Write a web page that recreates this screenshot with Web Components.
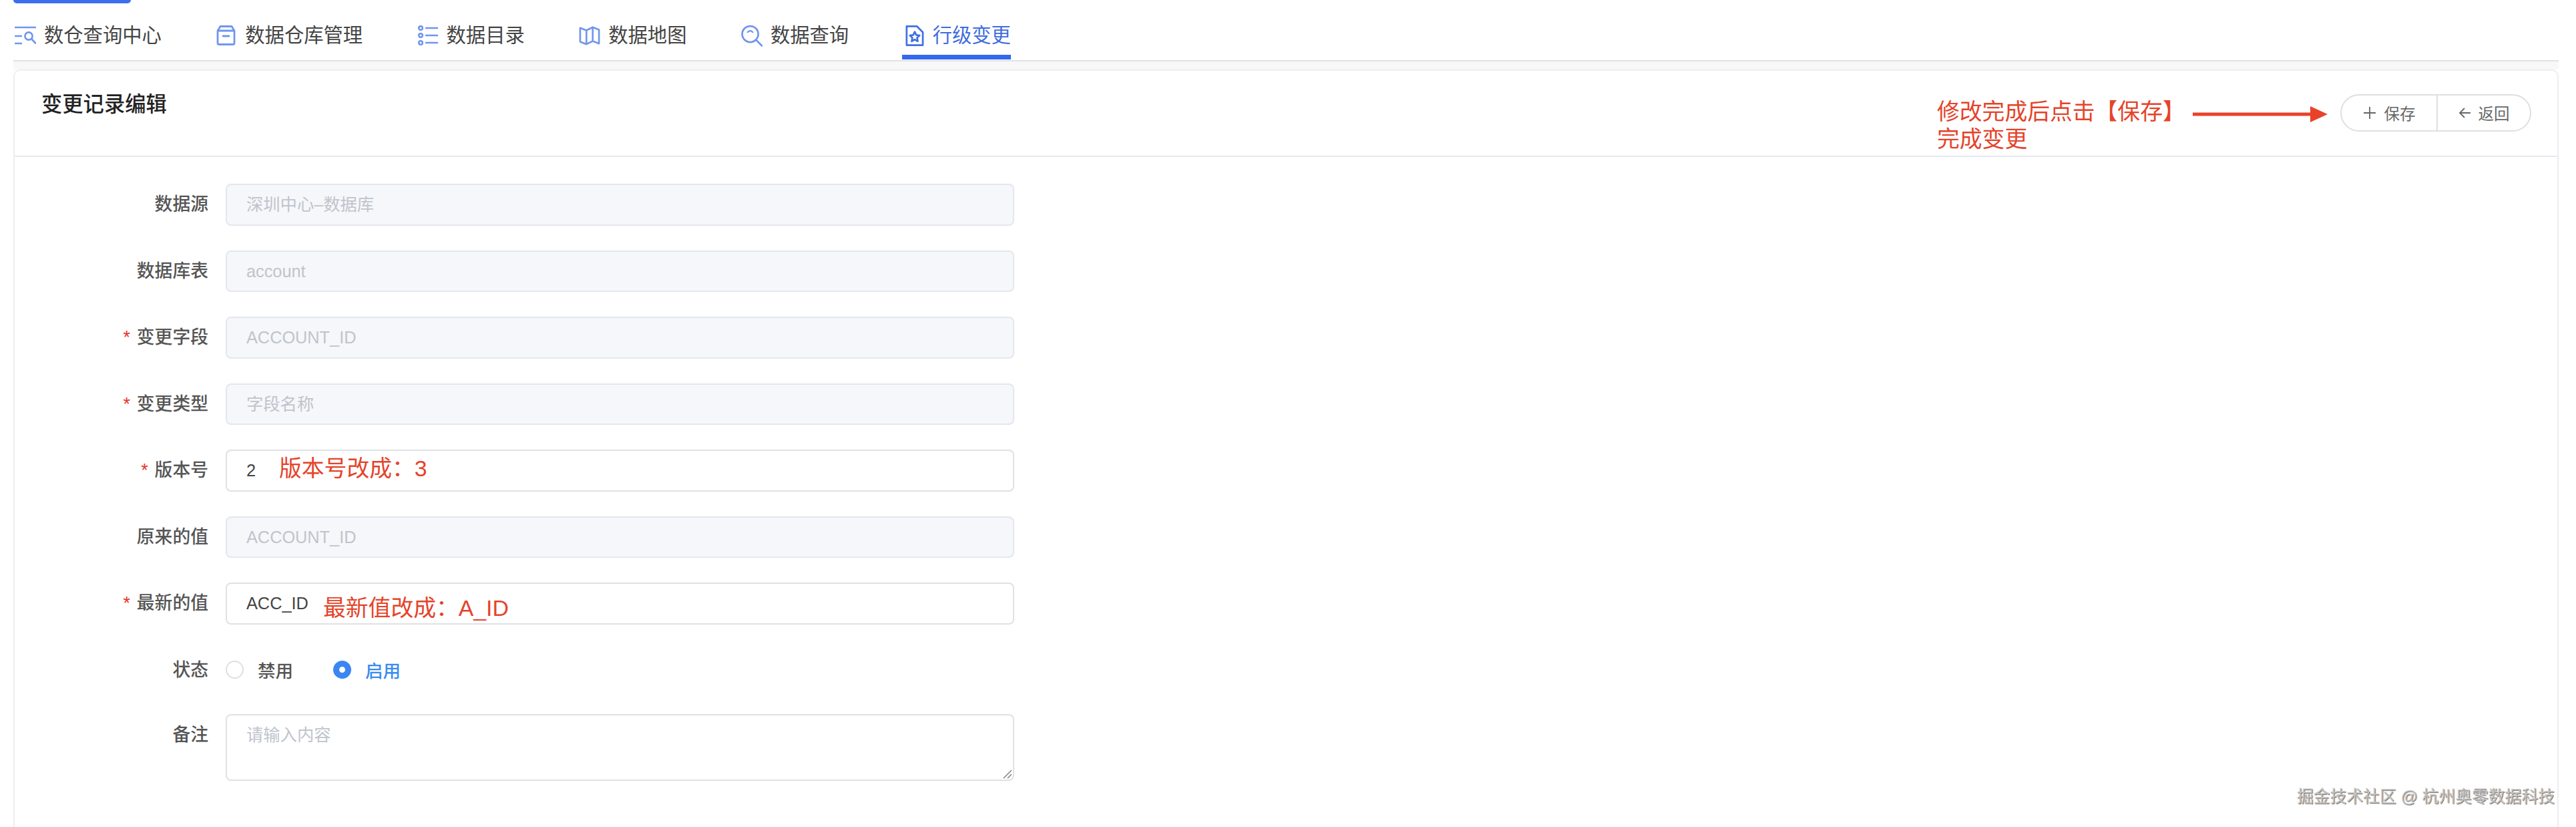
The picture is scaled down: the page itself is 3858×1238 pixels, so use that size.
<!DOCTYPE html>
<html>
<head>
<meta charset="utf-8">
<title>变更记录编辑</title>
<style>
html, body { margin: 0; height: 1238px; overflow: hidden; background: #fff; }
body { font-family: "Liberation Sans", "Noto Sans CJK SC", sans-serif; color: #333; }
</style>
</head>
<body>
<dw-page>
  <dw-tab slot="tabs">
    <svg slot="icon" width="32" height="28" viewBox="0 0 32 28" fill="none" stroke="#7196ee" stroke-width="2.6" stroke-linecap="round"><path d="M1 2H31M1 15H10M1 26H10"/><circle cx="21" cy="15" r="5.6"/><path d="M25.5 19.5L31 25.5"/></svg>
    数仓查询中心
  </dw-tab>
  <dw-tab slot="tabs">
    <svg slot="icon" width="32" height="30" viewBox="0 0 32 30" fill="none" stroke="#7196ee" stroke-width="2.8" stroke-linecap="round" stroke-linejoin="round"><path d="M3 8L7 1.5H24L28 8V26.5Q28 28.5 26 28.5H5Q3 28.5 3 26.5ZM3 8H28"/><path d="M11 16H20"/></svg>
    数据仓库管理
  </dw-tab>
  <dw-tab slot="tabs">
    <svg slot="icon" width="32" height="30" viewBox="0 0 32 30" fill="none" stroke="#7196ee" stroke-width="2.6" stroke-linecap="round"><circle cx="5" cy="4" r="2.8"/><circle cx="5" cy="15" r="2.8"/><circle cx="5" cy="26" r="2.8"/><path d="M13 4H30M13 15H30M13 26H30"/></svg>
    数据目录
  </dw-tab>
  <dw-tab slot="tabs">
    <svg slot="icon" width="34" height="30" viewBox="0 0 34 30" fill="none" stroke="#7196ee" stroke-width="2.8" stroke-linejoin="round"><path d="M2 3L12 7L22 2L32 6V28L22 24L12 29L2 25ZM12 7V29M22 2V24"/></svg>
    数据地图
  </dw-tab>
  <dw-tab slot="tabs">
    <svg slot="icon" width="33" height="33" viewBox="0 0 33 33" fill="none" stroke="#7196ee" stroke-width="2.8" stroke-linecap="round"><circle cx="14" cy="14" r="12.4"/><path d="M23 23L32 32"/><path d="M10 11Q14 7 18 11" stroke-width="2.2"/></svg>
    数据查询
  </dw-tab>
  <dw-tab slot="tabs" active>
    <svg slot="icon" width="33" height="33" viewBox="0 0 33 33" fill="none" stroke="#4170e4" stroke-width="2.8" stroke-linejoin="round"><path d="M5 2H21L30 11V31H5Z"/><path d="M17.5 10.5L19.8 15.4L25 16.1L21.2 19.7L22.2 25L17.5 22.4L12.8 25L13.8 19.7L10 16.1L15.2 15.4Z"/></svg>
    行级变更
  </dw-tab>

  <dw-card slot="main">
    <span slot="title">变更记录编辑</span>
    <dw-note slot="header" style="left:2879px;top:41px;">修改完成后点击【保存】<br>完成变更</dw-note>
    <dw-arrow slot="header" style="left:3262px;top:53px;"></dw-arrow>
    <dw-btn-group slot="actions">
      <dw-btn>
        <svg slot="icon" width="20" height="20" viewBox="0 0 20 20" stroke="#666" stroke-width="1.8"><path d="M10 1V19M1 10H19"/></svg>
        保存
      </dw-btn>
      <dw-btn>
        <svg slot="icon" width="18" height="18" viewBox="0 0 18 18" fill="none" stroke="#666" stroke-width="1.8"><path d="M18 9H2M9 2L2 9L9 16"/></svg>
        返回
      </dw-btn>
    </dw-btn-group>

    <form-row label="数据源"><dw-input disabled>深圳中心–数据库</dw-input></form-row>
    <form-row label="数据库表"><dw-input disabled>account</dw-input></form-row>
    <form-row label="变更字段" required><dw-input disabled>ACCOUNT_ID</dw-input></form-row>
    <form-row label="变更类型" required><dw-input disabled>字段名称</dw-input></form-row>
    <form-row label="版本号" required>
      <dw-input>2<dw-note slot="note" style="left:78px;top:6px;">版本号改成：3</dw-note></dw-input>
    </form-row>
    <form-row label="原来的值"><dw-input disabled>ACCOUNT_ID</dw-input></form-row>
    <form-row label="最新的值" required>
      <dw-input>ACC_ID<dw-note slot="note" style="left:144px;top:16px;">最新值改成：A_ID</dw-note></dw-input>
    </form-row>
    <form-row label="状态" radios>
      <dw-radio>禁用</dw-radio>
      <dw-radio checked>启用</dw-radio>
    </form-row>
    <form-row label="备注" top><dw-textarea>请输入内容</dw-textarea></form-row>

    <dw-mark slot="overlay">掘金技术社区 @ 杭州奥零数据科技</dw-mark>
  </dw-card>
</dw-page>

<script>
class DwPage extends HTMLElement {
    constructor() {
        super();
        this.attachShadow({mode: "open"});
        this.shadowRoot.innerHTML = `
        <style>
        :host { display: flex; flex-direction: column; height: 1238px; box-sizing: border-box; padding: 0 26px 0 20px; }
        .logo-bar { width: 176px; height: 5px; background: #3a6ff0; border-radius: 0 0 5px 5px; flex: none; }
        .tabs { display: flex; gap: 81.5px; padding: 31px 0 0 2px; margin-bottom: 1px; flex: none; }
        .rule { height: 2px; margin-left: 0; background: #e2e2e4; flex: none; }
        .band { height: 12px; background: #f8f8f9; flex: none; }
        .main { flex: 1; display: flex; min-height: 0; }
        </style>
        <div class="logo-bar"></div>
        <div class="tabs"><slot name="tabs"></slot></div>
        <div class="rule"></div>
        <div class="band"></div>
        <div class="main"><slot name="main"></slot></div>
        `;
    }
}

class DwTab extends HTMLElement {
    constructor() {
        super();
        this.attachShadow({mode: "open"});
        this.shadowRoot.innerHTML = `
        <style>
        :host { display: flex; align-items: center; gap: 12px; height: 34px; padding-bottom: 12px; border-bottom: 7px solid transparent; font-size: 29.3px; line-height: 34px; color: #444; white-space: nowrap; }
        :host([active]) { margin-left: -2px; padding-left: 2px; border-bottom-color: #3368f0; color: #3f6ce0; }
        .icon { width: 32px; display: flex; justify-content: center; }
        </style>
        <span class="icon"><slot name="icon"></slot></span>
        <slot></slot>
        `;
    }
}

class DwCard extends HTMLElement {
    constructor() {
        super();
        this.attachShadow({mode: "open"});
        this.shadowRoot.innerHTML = `
        <style>
        :host { display: block; flex: 1; position: relative; box-sizing: border-box; border: 2px solid #eceef3; border-bottom: 0; border-radius: 10px 10px 0 0; background: #fff; }
        header { position: relative; display: flex; justify-content: space-between; align-items: flex-start; height: 129px; box-sizing: border-box; padding: 30px 39px 0 40px; border-bottom: 2px solid #e8e8f0; }
        .title { font-size: 31.3px; line-height: 42px; font-weight: 500; color: #222; }
        .actions { margin-top: 5px; }
        .form { display: flex; flex-direction: column; gap: 37px; padding-top: 40px; }
        </style>
        <header>
            <div class="title"><slot name="title"></slot></div>
            <slot name="header"></slot>
            <div class="actions"><slot name="actions"></slot></div>
        </header>
        <div class="form"><slot></slot></div>
        <slot name="overlay"></slot>
        `;
    }
}

class DwNote extends HTMLElement {
    constructor() {
        super();
        this.attachShadow({mode: "open"});
        this.shadowRoot.innerHTML = `
        <style>
        :host { display: block; position: absolute; font-size: 33.8px; line-height: 41px; color: #e5432a; white-space: nowrap; }
        </style>
        <slot></slot>
        `;
    }
}

class DwArrow extends HTMLElement {
    constructor() {
        super();
        this.attachShadow({mode: "open"});
        this.shadowRoot.innerHTML = `
        <style>
        :host { display: block; position: absolute; width: 202px; height: 24px; }
        svg { display: block; }
        </style>
        <svg width="202" height="24" viewBox="0 0 202 24"><path d="M0 9.5H176V0L202 12L176 24V14.5H0Z" fill="#e8432a"/></svg>
        `;
    }
}

class DwBtnGroup extends HTMLElement {
    constructor() {
        super();
        this.attachShadow({mode: "open"});
        this.shadowRoot.innerHTML = `
        <style>
        :host { display: flex; height: 56px; box-sizing: border-box; width: 286px; border: 2px solid #dedfe2; border-radius: 28px; overflow: hidden; }
        ::slotted(dw-btn:first-child) { width: 142px; border-right: 2px solid #dedfe2; }
        ::slotted(dw-btn:last-child) { flex: 1; }
        </style>
        <slot></slot>
        `;
    }
}

class DwBtn extends HTMLElement {
    constructor() {
        super();
        this.attachShadow({mode: "open"});
        this.shadowRoot.innerHTML = `
        <style>
        :host { display: flex; align-items: center; justify-content: center; gap: 12px; font-size: 23.5px; color: #666; }
        .icon { display: flex; }
        </style>
        <span class="icon"><slot name="icon"></slot></span>
        <span><slot></slot></span>
        `;
    }
}

class FormRow extends HTMLElement {
    constructor() {
        super();
        this.attachShadow({mode: "open"});
        this.shadowRoot.innerHTML = `
        <style>
        :host { display: grid; grid-template-columns: 290px auto; column-gap: 26px; justify-content: start; align-items: center; }
        :host([top]) { align-items: start; }
        :host([radios]) { height: 60px; }
        .label { text-align: right; font-size: 26.8px; line-height: 62px; font-weight: 500; color: #555; white-space: nowrap; }
        .star { color: #e8332a; font-weight: 400; margin-right: 10px; }
        .body { display: flex; align-items: center; gap: 60px; }
        :host(:not([radios])) .body { display: block; }
        </style>
        <div class="label"><span class="star" hidden>*</span><span class="text"></span></div>
        <div class="body"><slot></slot></div>
        `;
    }
    connectedCallback() {
        this.shadowRoot.querySelector(".text").textContent = this.getAttribute("label");
        if (this.hasAttribute("required")) {
            this.shadowRoot.querySelector(".star").hidden = false;
        }
    }
}

class DwInput extends HTMLElement {
    constructor() {
        super();
        this.attachShadow({mode: "open"});
        this.shadowRoot.innerHTML = `
        <style>
        :host { display: block; position: relative; box-sizing: border-box; width: 1181px; height: 62.5px; padding-left: 29px; border: 2px solid #dfe1e5; border-radius: 8px; background: #fff; font-size: 25.3px; line-height: 58px; color: #444; }
        :host([disabled]) { background: #f5f7fa; border-color: #e4e7ed; color: #c0c4cc; }
        </style>
        <slot></slot>
        <slot name="note"></slot>
        `;
    }
}

class DwTextarea extends HTMLElement {
    constructor() {
        super();
        this.attachShadow({mode: "open"});
        this.shadowRoot.innerHTML = `
        <style>
        :host { display: block; position: relative; box-sizing: border-box; width: 1181px; height: 100px; padding-left: 29px; border: 2px solid #dfe1e5; border-radius: 8px; font-size: 25.3px; line-height: 58px; color: #c0c4cc; }
        svg { position: absolute; right: 1px; bottom: 1px; }
        </style>
        <slot></slot>
        <svg width="14" height="14" viewBox="0 0 14 14" stroke="#777" stroke-width="1.4"><path d="M1 13L13 1M7 13L13 7"/></svg>
        `;
    }
}

class DwRadio extends HTMLElement {
    constructor() {
        super();
        this.attachShadow({mode: "open"});
        this.shadowRoot.innerHTML = `
        <style>
        :host { display: flex; align-items: center; gap: 21px; font-size: 26.5px; font-weight: 500; color: #555; }
        :host([checked]) { color: #3a8bf0; }
        .dot { width: 27px; height: 27px; box-sizing: border-box; border: 2px solid #dcdfe4; border-radius: 50%; background: #fff; }
        :host([checked]) .dot { border: 9px solid #3b86f2; }
        </style>
        <span class="dot"></span>
        <span><slot></slot></span>
        `;
    }
}

class DwMark extends HTMLElement {
    constructor() {
        super();
        this.attachShadow({mode: "open"});
        this.shadowRoot.innerHTML = `
        <style>
        :host { position: absolute; right: 4px; bottom: 28px; font-size: 24.8px; line-height: 34px; color: #c4c4c4; text-shadow: 1px 1px 1px #666; white-space: nowrap; }
        </style>
        <slot></slot>
        `;
    }
}

customElements.define("dw-page", DwPage);
customElements.define("dw-tab", DwTab);
customElements.define("dw-card", DwCard);
customElements.define("dw-note", DwNote);
customElements.define("dw-arrow", DwArrow);
customElements.define("dw-btn-group", DwBtnGroup);
customElements.define("dw-btn", DwBtn);
customElements.define("form-row", FormRow);
customElements.define("dw-input", DwInput);
customElements.define("dw-textarea", DwTextarea);
customElements.define("dw-radio", DwRadio);
customElements.define("dw-mark", DwMark);
</script>
</body>
</html>
